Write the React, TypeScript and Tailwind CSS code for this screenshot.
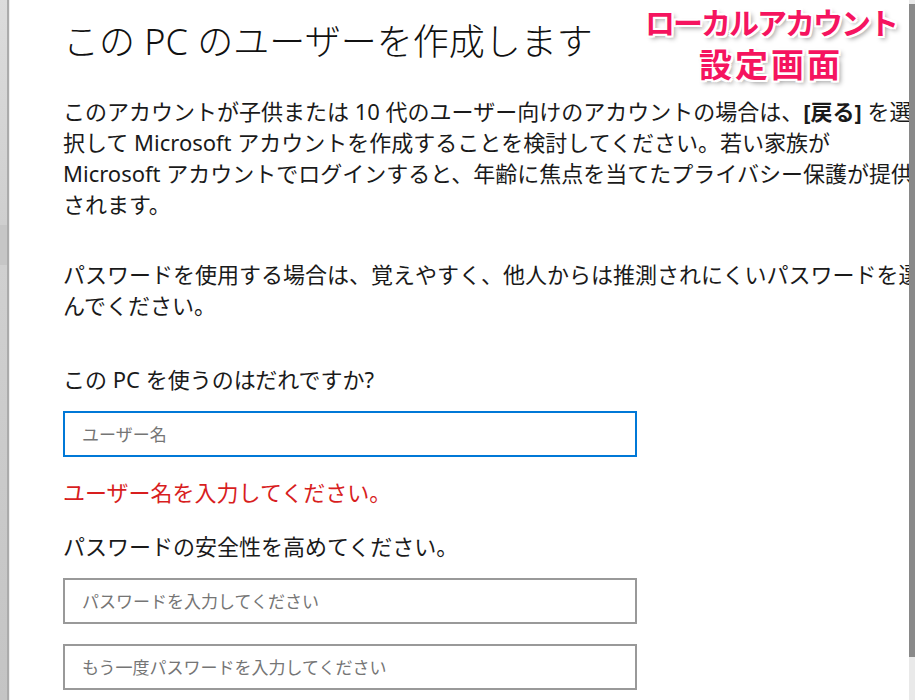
const font = "font-['Noto_Sans','Noto_Sans_CJK_JP',sans-serif]";

function Field({ placeholder, active }: { placeholder: string; active?: boolean }) {
  return (
    <input
      type="text"
      readOnly
      placeholder={placeholder}
      className={
        "block h-[46px] w-[574px] border-2 bg-white pl-[17px] text-[17px] text-[#1a1a1a] outline-none placeholder:text-[#757575] " +
        (active ? "border-[#0078d7]" : "border-[#999999]")
      }
    />
  );
}

export default function App() {
  return (
    <div className={`relative flex h-[700px] w-full overflow-hidden bg-white ${font}`}>
      {/* window frame on the left */}
      <div className="flex flex-col w-[7px] shrink-0">
        <div className="h-[225px] bg-gradient-to-b from-[#dcdcdc] to-[#cfcfcf]" />
        <div className="h-[40px] bg-[#c6c6c6]" />
        <div className="flex-1 bg-gradient-to-b from-[#d0d0d0] to-[#c4c4c4]" />
      </div>
      <div className="w-[2px] shrink-0 bg-[#ababab]" />
      <div className="w-[1px] shrink-0 bg-[#efefef]" />

      <main className="min-w-0 flex-1 overflow-hidden pl-[53px] pt-[20px] text-[#1a1a1a]">
        <h1 className="whitespace-nowrap text-[36px] font-light leading-[44px] text-[#111]">
          この PC のユーザーを作成します
        </h1>

        <div className="mt-[32px] whitespace-nowrap text-[22px] leading-[31px]">
          <p>
            このアカウントが子供または 10 代のユーザー向けのアカウントの場合は、
            <b className="font-bold">[戻る]</b> を選
          </p>
          <p>択して Microsoft アカウントを作成することを検討してください。若い家族が</p>
          <p>Microsoft アカウントでログインすると、年齢に焦点を当てたプライバシー保護が提供</p>
          <p>されます。</p>
        </div>

        <div className="mt-[39px] whitespace-nowrap text-[22px] leading-[31px]">
          <p>パスワードを使用する場合は、覚えやすく、他人からは推測されにくいパスワードを選</p>
          <p>んでください。</p>
        </div>

        <p className="mt-[43px] whitespace-nowrap text-[22px] leading-[31px]">
          この PC を使うのはだれですか?
        </p>
        <div className="mt-[16px]">
          <Field placeholder="ユーザー名" active />
        </div>
        <p className="mt-[20px] whitespace-nowrap text-[22px] leading-[31px] text-[#d81e1e]">
          ユーザー名を入力してください。
        </p>

        <p className="mt-[23px] whitespace-nowrap text-[22px] leading-[31px]">
          パスワードの安全性を高めてください。
        </p>
        <div className="mt-[16px] flex flex-col gap-[20px]">
          <Field placeholder="パスワードを入力してください" />
          <Field placeholder="もう一度パスワードを入力してください" />
        </div>
      </main>

      {/* scrollbar */}
      <div className="flex w-[6px] shrink-0 flex-col bg-[#e9e9e9]">
        <div className="h-[4px]" />
        <div className="h-[653px] bg-[#898989]" />
      </div>

      {/* annotation */}
      <div className="absolute right-[18px] top-[2px] flex flex-col items-center font-bold text-[#f5145f] [text-shadow:2px_0_#fff,-2px_0_#fff,0_2px_#fff,0_-2px_#fff,2px_2px_#fff,-2px_-2px_#fff,2px_-2px_#fff,-2px_2px_#fff,3px_3px_5px_rgba(0,0,0,0.45)]">
        <span className="whitespace-nowrap text-[30px] leading-[42px] tracking-[-2px]">
          ローカルアカウント
        </span>
        <span className="whitespace-nowrap text-[33px] leading-[42px] tracking-[3px]">
          設定画面
        </span>
      </div>
    </div>
  );
}
